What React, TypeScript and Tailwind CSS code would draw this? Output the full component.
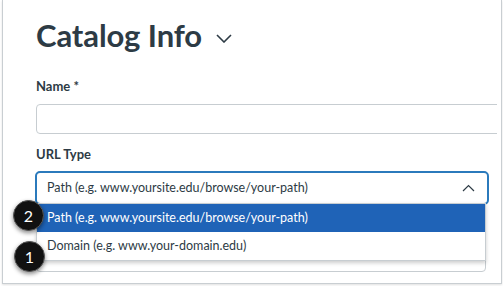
import React from 'react';

const Badge = ({n, className}: {n: string, className: string}) => (
    <div className={`absolute w-[31px] h-[31px] rounded-full bg-[#111] text-white flex items-center justify-center text-[16px] shadow-[0_2px_4px_rgba(0,0,0,0.45)] border border-[#555] ${className}`}>
        {n}
    </div>
);

const App = () => {
    return (
        <div className="w-[503px] h-[286px] bg-white overflow-hidden relative" style={{fontFamily: 'Lato, "Noto Sans", sans-serif'}}>
            <div className="ml-[2px] w-[500px] h-[284px] border-l border-r border-b border-[#c9ced2] shadow-[0_1px_2px_rgba(0,0,0,0.12)] pl-[33px] text-[#2d3b45] overflow-hidden relative">
                <div className="flex items-center gap-[14px] pt-[13px] h-[58px]">
                    <span className="text-[31px] font-bold leading-none tracking-[-0.1px]">Catalog Info</span>
                    <svg width="16" height="9" viewBox="0 0 16 9" className="mt-[6px]">
                        <path d="M1 1 L8 8 L15 1" fill="none" stroke="#2d3b45" strokeWidth="1.6"/>
                    </svg>
                </div>
                <div className="mt-[22px] text-[13px] font-bold leading-none">Name *</div>
                {/* input runs past the visible area */}
                <div className="mt-[11px] w-[461px] overflow-hidden">
                    <div className="h-[30px] w-[500px] border border-[#c7cdd1] rounded-[4px]"></div>
                </div>
                <div className="mt-[14px] text-[13px] font-bold leading-none">URL Type</div>
                <div className="mt-[10px] -ml-[1px] h-[34px] w-[454px] border-2 border-[#2b7abc] rounded-[5px] flex items-center justify-between pl-[10px] pr-[12px]">
                    <span className="text-[12.5px]">Path (e.g. www.yoursite.edu/browse/your-path)</span>
                    <svg width="13" height="8" viewBox="0 0 13 8">
                        <path d="M1 7 L6.5 1.5 L12 7" fill="none" stroke="#2d3b45" strokeWidth="1.2"/>
                    </svg>
                </div>
                <div className="w-[450px] h-[68px] border border-[#c7cdd1] rounded-[4px] -mt-[1px]"></div>

                <div className="absolute left-[33px] top-[203px] w-[450px] border border-[#c7cdd1] bg-white shadow-[0_2px_4px_rgba(0,0,0,0.2)]">
                    <div className="h-[28px] bg-[#1f63b7] text-white text-[12.5px] flex items-center pl-[10px]">
                        Path (e.g. www.yoursite.edu/browse/your-path)
                    </div>
                    <div className="h-[28px] text-[12.5px] flex items-center pl-[10px]">
                        Domain (e.g. www.your-domain.edu)
                    </div>
                </div>
            </div>
            <Badge n="2" className="left-[13px] top-[200px]"/>
            <Badge n="1" className="left-[14px] top-[241px]"/>
        </div>
    );
};

export default App;
